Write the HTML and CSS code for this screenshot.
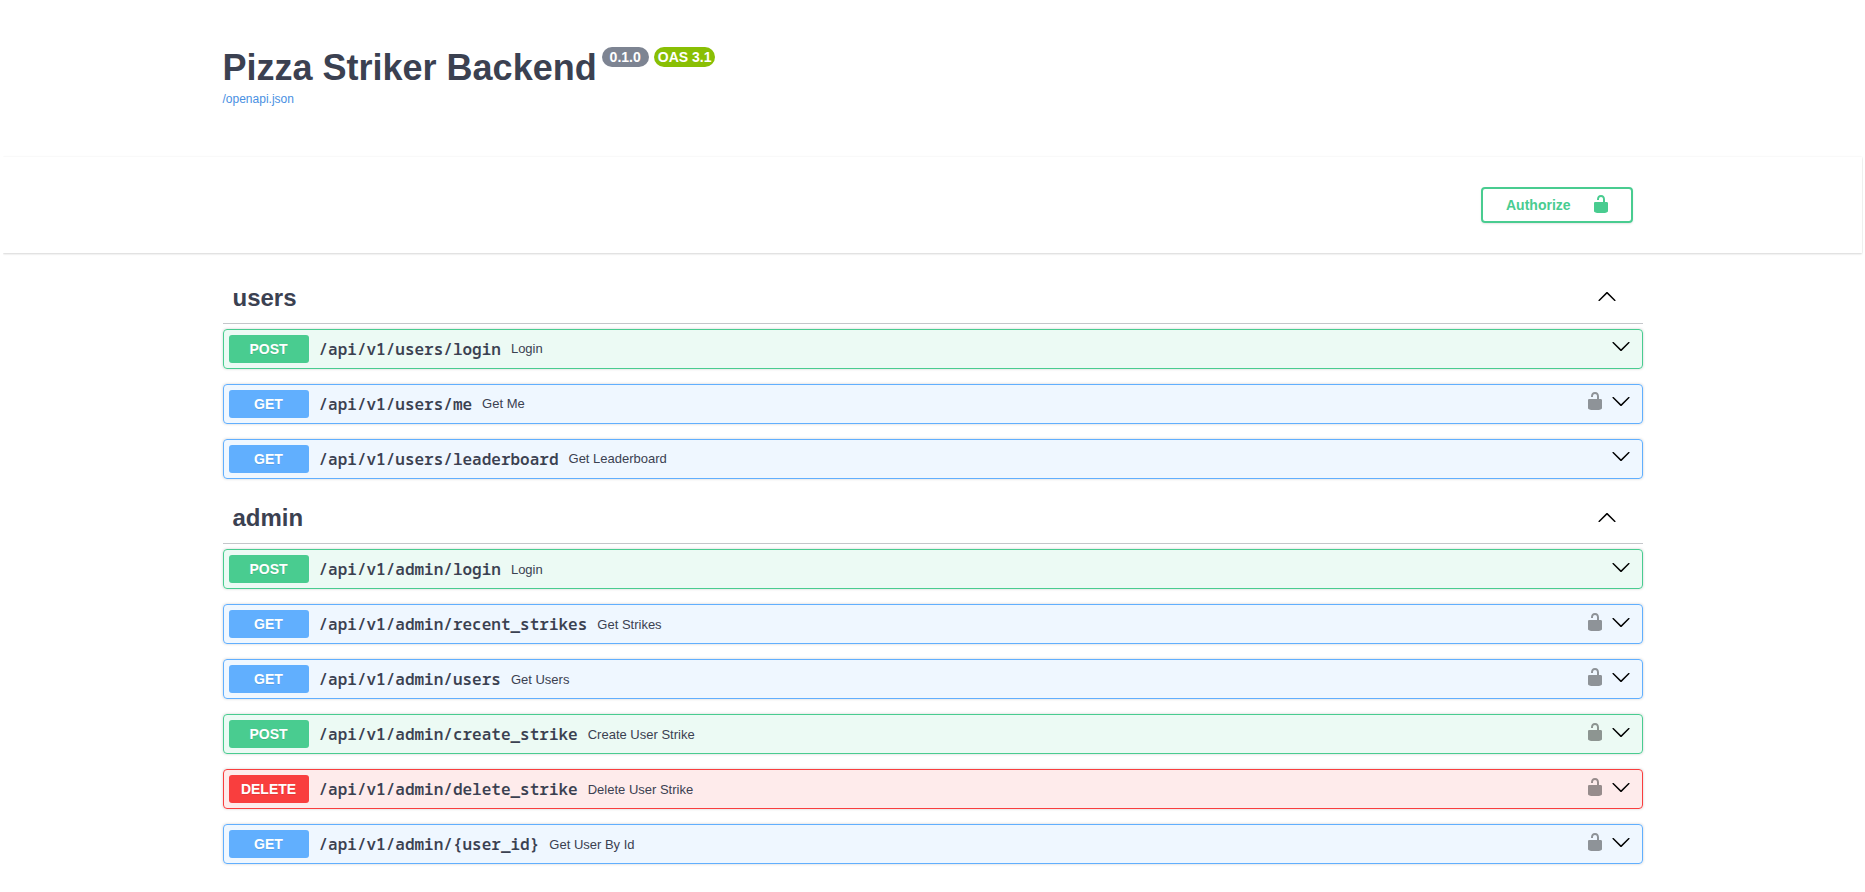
FILE: index.html
```
<!DOCTYPE html>
<html lang="en">
<head>
<meta charset="utf-8">
<title>Pizza Striker Backend</title>
<link rel="stylesheet" href="styles.css">
</head>
<body>
<svg class="sprite" aria-hidden="true">
  <symbol id="unlocked" viewBox="0 0 20 20"><path d="M15.8 8H14V5.6C14 2.703 12.665 1 10 1 7.334 1 6 2.703 6 5.6V6h2v-.801C8 3.754 8.797 3 10 3c1.203 0 2 .754 2 2.199V8H4c-.553 0-1 .646-1 1.199V17c0 .549.428 1.139.951 1.307l1.197.387C5.672 18.861 6.55 19 7.1 19h5.8c.549 0 1.428-.139 1.951-.307l1.196-.387c.524-.167.953-.757.953-1.306V9.199C17 8.646 16.352 8 15.8 8z"/></symbol>
  <symbol id="down" viewBox="0 0 20 20"><path d="M17.418 6.109c.272-.268.709-.268.979 0s.271.701 0 .969l-7.908 7.83c-.27.268-.707.268-.979 0l-7.908-7.83c-.27-.268-.27-.701 0-.969.271-.268.709-.268.979 0L10 13.25z"/></symbol>
  <symbol id="up" viewBox="0 0 20 20"><path d="M2.582 13.891c-.272.268-.709.268-.979 0s-.271-.701 0-.969l7.908-7.83c.27-.268.707-.268.979 0l7.908 7.83c.27.268.27.701 0 .969-.271.268-.709.268-.978 0L10 6.75z"/></symbol>
</svg>
<header class="info wrapper">
  <div class="title-row">
    <h1 class="title">Pizza Striker Backend</h1>
    <span class="badge version">0.1.0</span>
    <span class="badge oas">OAS 3.1</span>
  </div>
  <a class="spec-link">/openapi.json</a>
</header>
<div class="scheme">
  <div class="wrapper auth">
    <button class="authorize"><span>Authorize</span><svg class="icon"><use href="#unlocked"/></svg></button>
  </div>
</div>
<main class="wrapper">
  <section class="users">
    <h3 class="tag"><span>users</span><svg class="icon"><use href="#up"/></svg></h3>
    <div class="op post"><span class="method">POST</span><span class="path">/api/v1/users/login</span><span class="desc">Login</span><svg class="icon arrow"><use href="#down"/></svg></div>
    <div class="op get"><span class="method">GET</span><span class="path">/api/v1/users/me</span><span class="desc">Get Me</span><svg class="icon lock"><use href="#unlocked"/></svg><svg class="icon arrow"><use href="#down"/></svg></div>
    <div class="op get"><span class="method">GET</span><span class="path">/api/v1/users/leaderboard</span><span class="desc">Get Leaderboard</span><svg class="icon arrow"><use href="#down"/></svg></div>
  </section>
  <section class="admin">
    <h3 class="tag"><span>admin</span><svg class="icon"><use href="#up"/></svg></h3>
    <div class="op post"><span class="method">POST</span><span class="path">/api/v1/admin/login</span><span class="desc">Login</span><svg class="icon arrow"><use href="#down"/></svg></div>
    <div class="op get"><span class="method">GET</span><span class="path">/api/v1/admin/recent_strikes</span><span class="desc">Get Strikes</span><svg class="icon lock"><use href="#unlocked"/></svg><svg class="icon arrow"><use href="#down"/></svg></div>
    <div class="op get"><span class="method">GET</span><span class="path">/api/v1/admin/users</span><span class="desc">Get Users</span><svg class="icon lock"><use href="#unlocked"/></svg><svg class="icon arrow"><use href="#down"/></svg></div>
    <div class="op post"><span class="method">POST</span><span class="path">/api/v1/admin/create_strike</span><span class="desc">Create User Strike</span><svg class="icon lock"><use href="#unlocked"/></svg><svg class="icon arrow"><use href="#down"/></svg></div>
    <div class="op delete"><span class="method">DELETE</span><span class="path">/api/v1/admin/delete_strike</span><span class="desc">Delete User Strike</span><svg class="icon lock"><use href="#unlocked"/></svg><svg class="icon arrow"><use href="#down"/></svg></div>
    <div class="op get"><span class="method">GET</span><span class="path">/api/v1/admin/{user_id}</span><span class="desc">Get User By Id</span><svg class="icon lock"><use href="#unlocked"/></svg><svg class="icon arrow"><use href="#down"/></svg></div>
  </section>
</main>
</body>
</html>
```
FILE: styles.css
```
* { box-sizing: border-box; }
body {
  margin: 0 2.5px;
  height: 892px;
  overflow: hidden;
  background: #fff;
  color: #3b4151;
  font-family: "Liberation Sans", Arial, sans-serif;
}
.sprite { position: absolute; width: 0; height: 0; }
.wrapper { width: 1460px; margin: 0 auto; padding: 0 20px; }
.info { height: 157px; padding-top: 47px; }
.title-row { display: flex; align-items: flex-start; height: 42px; }
.title { margin: 0 5px 0 0; font-size: 36px; line-height: 42px; font-weight: 700; }
.badge {
  height: 20px;
  border-radius: 57px;
  color: #fff;
  font-size: 14px;
  line-height: 20px;
  font-weight: 700;
  text-align: center;
  white-space: nowrap;
}
.version { width: 47px; margin-right: 5px; background: #7d8492; }
.oas { width: 61px; padding-left: 1px; background: #89bf04; }
.spec-link { display: block; font-size: 12px; line-height: 20px; color: #4990e2; }
.scheme {
  height: 96px;
  margin-right: 1px;
  padding-top: 30px;
  background: #fff;
  box-shadow: 0 1px 2px rgba(0, 0, 0, .15), 0 0 2px rgba(0, 0, 0, .06);
}
.auth { display: flex; justify-content: flex-end; padding-right: 29.5px; }
.authorize {
  display: flex;
  align-items: center;
  justify-content: space-between;
  width: 152px;
  height: 36px;
  padding: 0 20px 0 23.5px;
  border: 2px solid #49cc90;
  border-radius: 4px;
  background: transparent;
  box-shadow: 0 1px 2px rgba(0, 0, 0, .1);
  color: #49cc90;
  font: 700 14px/17px "Liberation Sans", Arial, sans-serif;
}
.icon { display: block; flex: none; width: 20px; height: 20px; fill: currentColor; }
.authorize .icon { margin-top: -2px; }
main.wrapper { padding-top: 20.6px; }
.admin { padding-top: .6px; }
.tag {
  display: flex;
  align-items: center;
  justify-content: space-between;
  height: 50px;
  margin: 0 0 5px;
  padding: 0 26px 1px 10px;
  border-bottom: 1px solid rgba(59, 65, 81, .3);
  font-size: 24px;
  line-height: 28px;
}
.tag .icon { color: #000; margin-top: -2px; }
.admin .tag .icon { margin-top: -1px; }
.op {
  display: flex;
  align-items: center;
  height: 40px;
  margin-bottom: 15px;
  padding: 5px;
  border: 1px solid;
  border-radius: 4px;
  box-shadow: 0 0 3px rgba(0, 0, 0, .19);
}
.method {
  width: 80px;
  height: 28px;
  border-radius: 3px;
  color: #fff;
  font-size: 14px;
  line-height: 28px;
  font-weight: 700;
  text-align: center;
  text-shadow: 0 1px 0 rgba(0, 0, 0, .1);
}
.path {
  margin: 0 10px;
  font: 600 16px/22px "Noto Sans Mono", monospace;
}
.desc { font-size: 13px; line-height: 15px; }
.arrow { margin: -4px 6px 0 6px; color: #000; }
.desc + .arrow, .lock { margin-left: auto; }
.lock { margin-top: -4px; color: #000; opacity: .4; }
.users .op .icon { margin-top: -5.5px; }
.post { border-color: #49cc90; background: rgba(73, 204, 144, .1); }
.post .method { background: #49cc90; }
.get { border-color: #61affe; background: rgba(97, 175, 254, .1); }
.get .method { background: #61affe; }
.delete { border-color: #f93e3e; background: rgba(249, 62, 62, .1); }
.delete .method { background: #f93e3e; }
```
